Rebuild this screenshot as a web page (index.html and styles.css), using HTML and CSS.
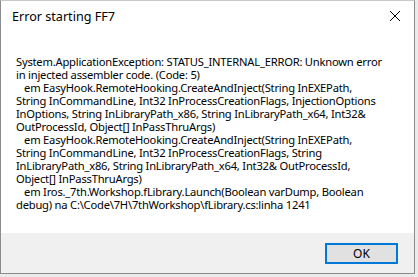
FILE: index.html
```html
<!DOCTYPE html>
<html lang="en">
<head>
    <meta charset="UTF-8">
    <title>Error starting FF7</title>
    <link rel="stylesheet" href="styles.css">
</head>
<body>
    <div class="dialog">
        <div class="titlebar">
            <span class="title">Error starting FF7</span>
            <svg class="close" width="12" height="12" viewBox="0 0 12 12">
                <path d="M1 1 L11 11 M11 1 L1 11" stroke="#000" stroke-width="1" fill="none"/>
            </svg>
        </div>
        <div class="content">
            <p class="message">System.ApplicationException: STATUS_INTERNAL_ERROR: Unknown error
in injected assembler code. (Code: 5)
   em EasyHook.RemoteHooking.CreateAndInject(String InEXEPath,
String InCommandLine, Int32 InProcessCreationFlags, InjectionOptions
InOptions, String InLibraryPath_x86, String InLibraryPath_x64, Int32&amp;
OutProcessId, Object[] InPassThruArgs)
   em EasyHook.RemoteHooking.CreateAndInject(String InEXEPath,
String InCommandLine, Int32 InProcessCreationFlags, String
InLibraryPath_x86, String InLibraryPath_x64, Int32&amp; OutProcessId,
Object[] InPassThruArgs)
   em Iros._7th.Workshop.fLibrary.Launch(Boolean varDump, Boolean
debug) na C:\Code\7H\7thWorkshop\fLibrary.cs:linha 1241</p>
        </div>
        <div class="footer">
            <button class="ok">OK</button>
        </div>
    </div>
</body>
</html>
```

FILE: styles.css
```css
*{
    margin: 0;
    padding: 0;
    box-sizing: border-box;
}
body{
    background-color: #ebebeb;
    font-family: "Noto Sans", sans-serif;
    font-size: 12px;
    color: #000;
}
.dialog{
    width: 415px;
    height: 274px;
    background-color: #fff;
    border: 1px solid #8c8c8c;
    border-top-color: #c8c8c8;
    display: flex;
    flex-direction: column;
}
.titlebar{
    height: 30px;
    display: flex;
    align-items: center;
    justify-content: space-between;
    padding: 0 11px 0 11px;
}
.title{
    font-size: 12.6px;
}
.close{
    display: block;
    margin-right: 2px;
}
.content{
    flex: 1;
    padding: 24px 0 0 15px;
}
.message{
    white-space: pre;
    line-height: 13px;
    font-size: 11.2px;
    letter-spacing: -0.22px;
}
.footer{
    height: 40px;
    background-color: #f0f0f0;
    display: flex;
    justify-content: flex-end;
    align-items: flex-start;
    padding: 10px 16px 0 0;
}
.ok{
    width: 73px;
    height: 21px;
    background-color: #e1e1e1;
    border: 2px solid #0078d7;
    font-family: "Noto Sans", sans-serif;
    font-size: 12px;
    color: #000;
}
```
